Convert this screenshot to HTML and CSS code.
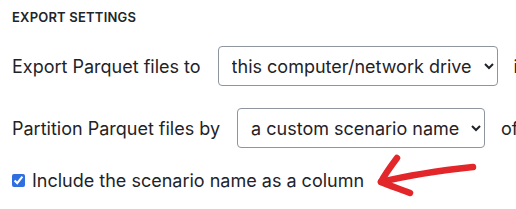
FILE: index.html
```html
<!DOCTYPE html>
<html lang="en">
<head>
    <meta charset="UTF-8">
    <title>Export Settings</title>
    <link rel="stylesheet" href="styles.css">
</head>
<body>
    <div class="panel">
        <h3 class="section-title">EXPORT SETTINGS</h3>

        <div class="row">
            <label for="exportTarget">Export Parquet files to</label>
            <select id="exportTarget" class="picker picker-wide">
                <option>this computer/network drive</option>
                <option>cloud storage</option>
            </select>
            <span class="trail">in</span>
        </div>

        <div class="row">
            <label for="partitionBy">Partition Parquet files by</label>
            <select id="partitionBy" class="picker">
                <option>a custom scenario name</option>
                <option>nothing</option>
            </select>
            <span class="trail">of</span>
        </div>

        <div class="check-row">
            <input type="checkbox" id="includeName" checked>
            <label for="includeName">Include the scenario name as a column</label>
        </div>

        <!-- hand drawn annotation -->
        <svg class="scribble" width="516" height="209" viewBox="0 0 516 209">
            <path d="M473 167 C 445 170, 410 175, 381 182" />
            <path d="M397 158 C 391 166, 385 174, 381 182 C 390 186, 400 189, 410 193" />
        </svg>
    </div>
</body>
</html>
```

FILE: styles.css
```css
body {
    margin: 0;
    background: #fff;
    font-family: Inter, "Noto Sans", sans-serif;
    color: #1f2328;
    overflow: hidden;
}

.panel {
    position: relative;
    width: 516px;
    height: 209px;
    padding: 9px 12px 0;
    box-sizing: border-box;
    white-space: nowrap;
}

.section-title {
    margin: 0 0 21px;
    font-size: 13px;
    font-weight: 600;
    letter-spacing: 0.2px;
    color: #212529;
}

.row {
    display: flex;
    align-items: center;
    gap: 17px;
    margin-bottom: 22px;
    font-size: 18px;
}

.picker {
    height: 40px;
    padding: 0 8px 0 9px;
    font-family: inherit;
    font-size: 18px;
    color: #1f2328;
    background: #fff;
    border: 1px solid #8f959c;
    border-radius: 4px;
}

.picker-wide {
    width: 280px;
}

.picker:not(.picker-wide) {
    width: 248px;
}

.trail {
    margin-left: -1px;
}

.check-row {
    display: flex;
    align-items: center;
    gap: 7px;
    margin-top: 1px;
    font-size: 18px;
}

.check-row input {
    width: 13px;
    height: 13px;
    margin: 0;
    accent-color: #2f6fe0;
}

.scribble {
    position: absolute;
    left: 0;
    top: 0;
    pointer-events: none;
}

.scribble path {
    fill: none;
    stroke: #e3262a;
    stroke-width: 6.5;
    stroke-linecap: round;
    stroke-linejoin: round;
}
```
